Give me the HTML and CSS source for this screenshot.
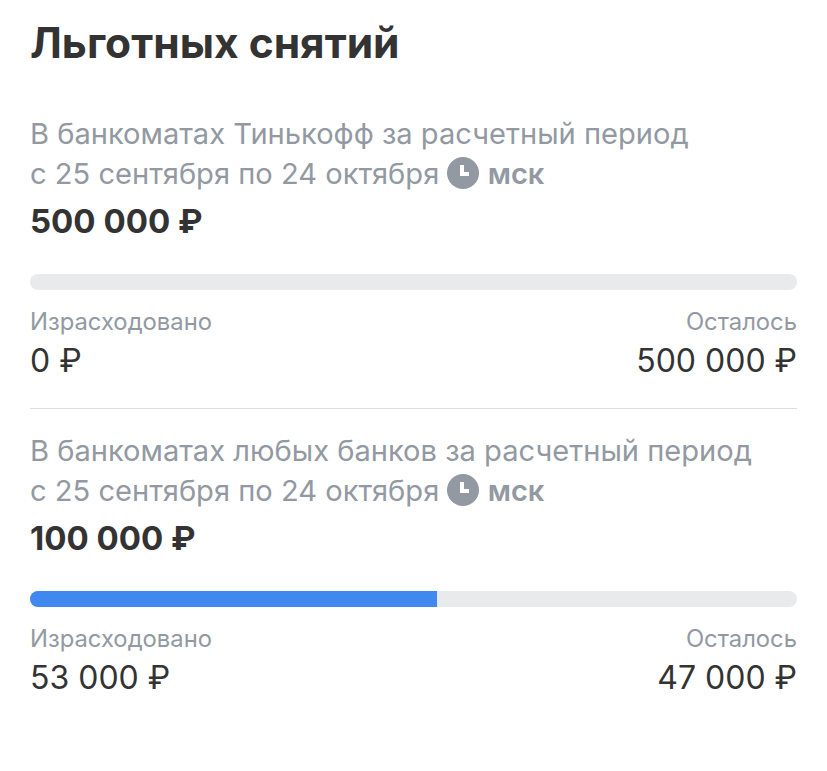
FILE: index.html
```html
<!DOCTYPE html>
<html lang="ru">
<head>
<meta charset="utf-8">
<title>Льготных снятий</title>
<link rel="stylesheet" href="styles.css">
</head>
<body>
<main class="page">
<h1 class="title">Льготных снятий</h1>
<section class="block">
<p class="desc">В банкоматах Тинькофф за расчетный период<br>с 25 сентября по 24 октября <svg class="clock" viewBox="0 0 32 32"><circle cx="16" cy="16" r="16" fill="#9299a2"/><path d="M15 8v9h7" fill="none" stroke="#fff" stroke-width="4"/></svg> <b class="tz">мск</b></p>
<p class="limit">500 000 ₽</p>
<div class="bar"><div class="fill" style="width:0%"></div></div>
<div class="stats"><div><div class="label">Израсходовано</div><div class="value">0 ₽</div></div><div class="right"><div class="label">Осталось</div><div class="value">500 000 ₽</div></div></div>
</section>
<hr class="sep">
<section class="block second">
<p class="desc">В банкоматах любых банков за расчетный период<br>с 25 сентября по 24 октября <svg class="clock" viewBox="0 0 32 32"><circle cx="16" cy="16" r="16" fill="#9299a2"/><path d="M15 8v9h7" fill="none" stroke="#fff" stroke-width="4"/></svg> <b class="tz">мск</b></p>
<p class="limit">100 000 ₽</p>
<div class="bar"><div class="fill" style="width:53%"></div></div>
<div class="stats"><div><div class="label">Израсходовано</div><div class="value">53 000 ₽</div></div><div class="right"><div class="label">Осталось</div><div class="value">47 000 ₽</div></div></div>
</section>
</main>
</body>
</html>
```
FILE: styles.css
```css
* { box-sizing: border-box; }
html, body { margin: 0; background: #fff; }
body { font-family: Inter, "Liberation Sans", sans-serif; color: #333333; }
.page { width: 827px; height: 771px; padding: 18px 30px 0; overflow: hidden; }
.title { margin: 0 0 46px; font-size: 42.5px; line-height: 50px; font-weight: 700; }
.desc { margin: 0; font-size: 29.1px; line-height: 40px; color: #9299a2; }
.clock { width: 32px; height: 32px; vertical-align: -5px; }
.tz { font-weight: 600; }
.limit { margin: 7px 0 0; font-size: 33px; line-height: 40px; font-weight: 700; }
.bar { margin-top: 33px; height: 16px; border-radius: 8px; background: #e8eaec; overflow: hidden; }
.fill { height: 100%; background: #3f88f0; }
.stats { display: flex; justify-content: space-between; margin-top: 17px; }
.label { font-size: 23.8px; line-height: 30px; color: #9299a2; }
.value { font-size: 32px; line-height: 40px; margin-top: 4px; }
.right { text-align: right; }
.sep { margin: 27px 0 22px; border: 0; border-top: 1px solid #dcdee1; }
```
